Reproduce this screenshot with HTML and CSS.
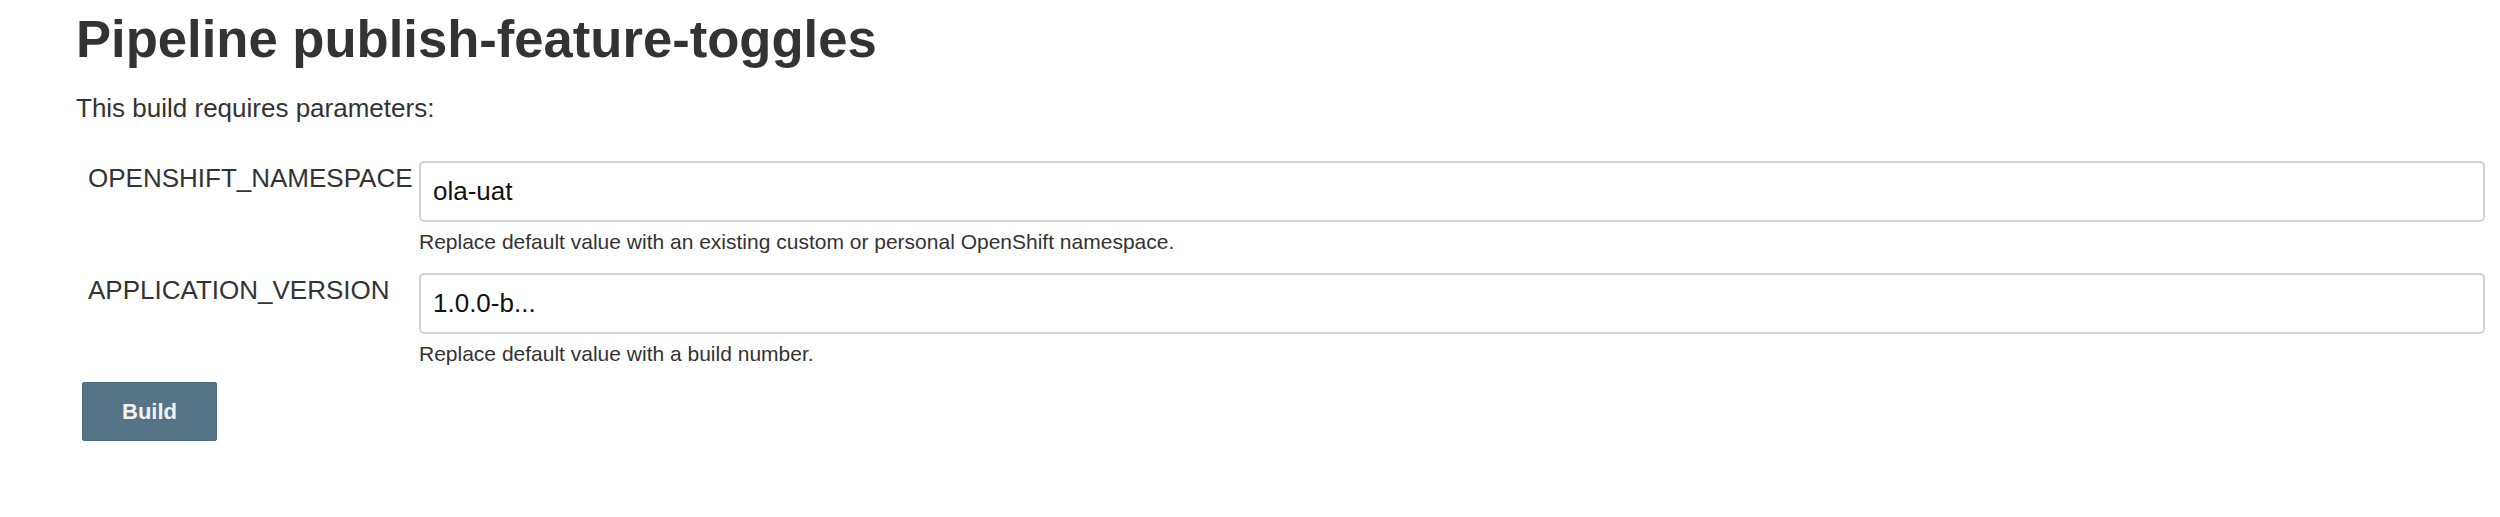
FILE: index.html
```html
<!DOCTYPE html>
<html>
<head>
<meta charset="utf-8">
<title>Pipeline publish-feature-toggles</title>
<link rel="stylesheet" href="styles.css">
</head>
<body>
<main class="page">
  <h1 class="title">Pipeline publish-feature-toggles</h1>
  <p class="intro">This build requires parameters:</p>
  <form class="params">
    <div class="param">
      <label class="param-name" for="ns">OPENSHIFT_NAMESPACE</label>
      <div class="param-field">
        <input class="param-input" id="ns" type="text" value="ola-uat">
        <div class="param-help">Replace default value with an existing custom or personal OpenShift namespace.</div>
      </div>
    </div>
    <div class="param">
      <label class="param-name" for="ver">APPLICATION_VERSION</label>
      <div class="param-field">
        <input class="param-input" id="ver" type="text" value="1.0.0-b...">
        <div class="param-help">Replace default value with a build number.</div>
      </div>
    </div>
    <div class="actions">
      <button class="build-btn" type="button">Build</button>
    </div>
  </form>
</main>
</body>
</html>
```
FILE: styles.css
```css
html, body {
  margin: 0;
  padding: 0;
  background: #ffffff;
}

.page {
  font-family: "Liberation Sans", Arial, Helvetica, sans-serif;
  color: #333333;
  padding: 7px 15px 0 76px;
}

.title {
  margin: 0;
  font-size: 52.6px;
  line-height: 64px;
  font-weight: bold;
  color: #333333;
}

.intro {
  margin: 21px 0 0 0;
  font-size: 26px;
  line-height: 32px;
}

.params {
  margin: 37px 0 0 0;
  display: flex;
  flex-direction: column;
  gap: 18px;
}

.param {
  display: grid;
  grid-template-columns: 331px 1fr;
  padding-left: 12px;
}

.param-name {
  font-size: 26px;
  line-height: 32px;
  padding-top: 1px;
  white-space: nowrap;
  color: #333333;
}

.param-field {
  display: flex;
  flex-direction: column;
  gap: 7px;
}

.param-input {
  box-sizing: border-box;
  width: 100%;
  height: 61px;
  margin: 0;
  padding: 0 12px;
  border: 2px solid #d2d2d2;
  border-radius: 5px;
  background: #ffffff;
  font-family: "Liberation Sans", Arial, Helvetica, sans-serif;
  font-size: 26px;
  color: #111111;
  outline: none;
}

.param-help {
  font-size: 21px;
  line-height: 26px;
  color: #333333;
}

.actions {
  display: flex;
  padding-left: 6px;
  margin-top: -3px;
}

.build-btn {
  box-sizing: border-box;
  width: 135px;
  height: 59px;
  margin: 0;
  padding: 0;
  border: 1px solid #4d6b7e;
  border-radius: 2px;
  background: #557487;
  color: #f2f2f2;
  font-family: "Liberation Sans", Arial, Helvetica, sans-serif;
  font-size: 22px;
  font-weight: bold;
}
```
